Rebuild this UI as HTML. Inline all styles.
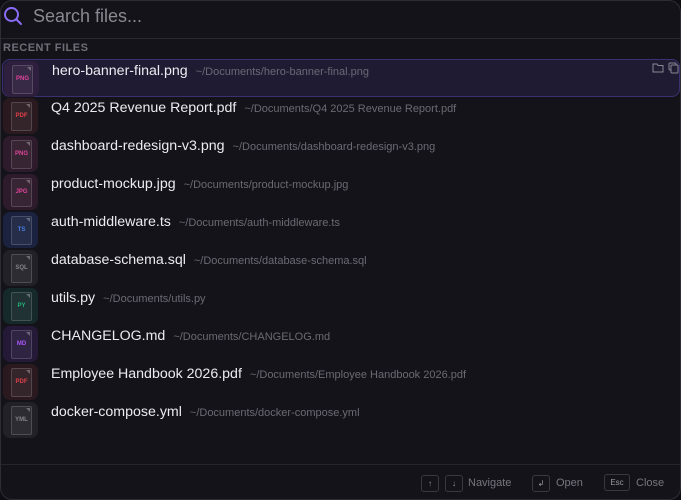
<!DOCTYPE html>
<html><head><style>
*{margin:0;padding:0;box-sizing:border-box}
body{width:681px;height:500px;background:#0e0d12;font-family:"Liberation Sans",sans-serif;overflow:hidden}
.wrap{position:absolute;left:0;top:0;width:681px;height:500px;background:#141319;border:1px solid #2e2d35;border-radius:12px;overflow:hidden}
.search{position:absolute;left:0;top:0;width:100%;height:38px;border-bottom:1px solid #2a2930}
.search span{position:absolute;left:32px;top:5px;font-size:18px;color:#8a8992}
.hdr{position:absolute;left:2px;top:41px;font-size:11px;font-weight:bold;color:#6f6e78;letter-spacing:.5px}
.row{position:absolute;left:1px;width:678px;height:38px;border-radius:8px}
.row.sel{background:#1e1b32;border:1px solid #3a3170}
.tile{position:absolute;left:1px;top:1px;width:35px;height:36px;border-radius:7px}
.doc{position:absolute;left:8px;top:4px;width:21px;height:29px;border:1px solid rgba(255,255,255,.16);border-radius:2px;background:rgba(255,255,255,.05);font-size:6px;font-weight:bold;text-align:center;line-height:27px}
.doc:after{content:"";position:absolute;right:1px;top:1px;border-left:4px solid transparent;border-top:4px solid rgba(255,255,255,.3)}
.name{position:absolute;left:49px;top:3px;font-size:14.2px;color:#ecebf0;white-space:nowrap}
.name small{font-size:11px;color:#6b6a74;margin-left:8px}
.foot{position:absolute;left:0;top:463px;width:100%;border-top:1px solid #26252c;height:40px}
.k{position:absolute;top:10px;height:17px;border:1px solid #3a3940;border-radius:3px;font-size:8px;color:#9a99a2;text-align:center;line-height:15px}
.ft{position:absolute;top:12px;font-size:11px;color:#77767f}
</style></head><body><div class="wrap">
<div class="search">
<svg style="position:absolute;left:2px;top:5px" width="20" height="20" viewBox="0 0 20 20"><circle cx="8.5" cy="8.5" r="6.5" fill="none" stroke="#8b6cf6" stroke-width="2"/><line x1="13.5" y1="13.5" x2="18" y2="18" stroke="#8b6cf6" stroke-width="2" stroke-linecap="round"/></svg>
<span>Search files...</span></div>
<div class="hdr">RECENT FILES</div>

<div class="row sel" style="top:58px"><div class="tile" style="background:#2d1f3d"><div class="doc" style="color:#e0449a">PNG</div></div><div class="name">hero-banner-final.png<small>~/Documents/hero-banner-final.png</small></div>
<svg style="position:absolute;left:649px;top:2px" width="28" height="12" viewBox="0 0 28 12"><path d="M1 2h4l1 1.5h5v6.5H1z" fill="none" stroke="#8a8992"/><rect x="17" y="1" width="7" height="7" rx="1" fill="none" stroke="#8a8992"/><rect x="19" y="3" width="7" height="8" rx="1" fill="#1e1b32" stroke="#8a8992"/></svg></div>
<div class="row" style="top:96px"><div class="tile" style="background:#2a1a1f"><div class="doc" style="color:#e0404a">PDF</div></div><div class="name">Q4 2025 Revenue Report.pdf<small>~/Documents/Q4 2025 Revenue Report.pdf</small></div></div>
<div class="row" style="top:134px"><div class="tile" style="background:#2d1a2a"><div class="doc" style="color:#e0449a">PNG</div></div><div class="name">dashboard-redesign-v3.png<small>~/Documents/dashboard-redesign-v3.png</small></div></div>
<div class="row" style="top:172px"><div class="tile" style="background:#2d1a2a"><div class="doc" style="color:#e0449a">JPG</div></div><div class="name">product-mockup.jpg<small>~/Documents/product-mockup.jpg</small></div></div>
<div class="row" style="top:210px"><div class="tile" style="background:#1a2240"><div class="doc" style="color:#4a7ee8">TS</div></div><div class="name">auth-middleware.ts<small>~/Documents/auth-middleware.ts</small></div></div>
<div class="row" style="top:248px"><div class="tile" style="background:#222127"><div class="doc" style="color:#85848c">SQL</div></div><div class="name">database-schema.sql<small>~/Documents/database-schema.sql</small></div></div>
<div class="row" style="top:286px"><div class="tile" style="background:#15282a"><div class="doc" style="color:#22b37a">PY</div></div><div class="name">utils.py<small>~/Documents/utils.py</small></div></div>
<div class="row" style="top:324px"><div class="tile" style="background:#241a38"><div class="doc" style="color:#a855f7">MD</div></div><div class="name">CHANGELOG.md<small>~/Documents/CHANGELOG.md</small></div></div>
<div class="row" style="top:362px"><div class="tile" style="background:#2a1a1f"><div class="doc" style="color:#e0404a">PDF</div></div><div class="name">Employee Handbook 2026.pdf<small>~/Documents/Employee Handbook 2026.pdf</small></div></div>
<div class="row" style="top:400px"><div class="tile" style="background:#222127"><div class="doc" style="color:#85848c">YML</div></div><div class="name">docker-compose.yml<small>~/Documents/docker-compose.yml</small></div></div>

<div class="foot">
<div class="k" style="left:420px;width:18px">↑</div><div class="k" style="left:444px;width:18px">↓</div><div class="ft" style="left:467px">Navigate</div>
<div class="k" style="left:531px;width:18px">↲</div><div class="ft" style="left:555px">Open</div>
<div class="k" style="left:603px;width:26px;top:9px">Esc</div><div class="ft" style="left:635px">Close</div>
</div>
</div></body></html>
